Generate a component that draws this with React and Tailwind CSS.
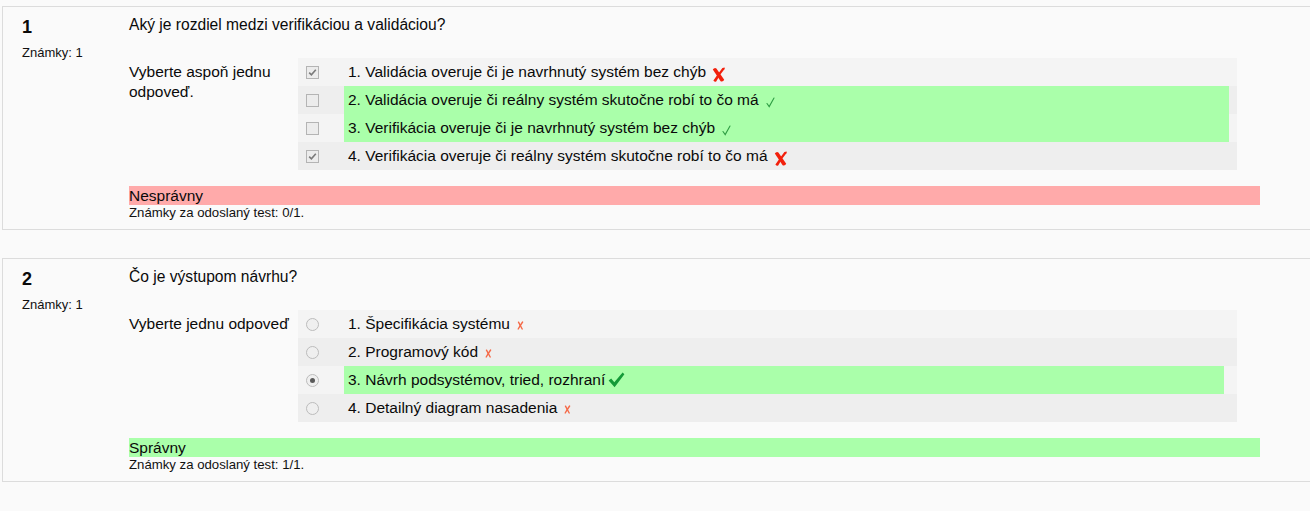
import React from "react";

const q1 = [
  { text: "1. Validácia overuje či je navrhnutý systém bez chýb", selected: true, correct: false },
  { text: "2. Validácia overuje či reálny systém skutočne robí to čo má", selected: false, correct: true },
  { text: "3. Verifikácia overuje či je navrhnutý systém bez chýb", selected: false, correct: true },
  { text: "4. Verifikácia overuje či reálny systém skutočne robí to čo má", selected: true, correct: false },
];

const q2 = [
  { text: "1. Špecifikácia systému", selected: false, correct: false },
  { text: "2. Programový kód", selected: false, correct: false },
  { text: "3. Návrh podsystémov, tried, rozhraní", selected: true, correct: true },
  { text: "4. Detailný diagram nasadenia", selected: false, correct: false },
];

const BigCross = () => (
  <svg width="13" height="15" viewBox="0 0 13 15" className="ml-[6px] mt-[4px] shrink-0">
    <path d="M0.8 2.6 Q2.2 0.4 4.4 1.4 L12.2 12.8 Q11.2 15 8.6 14.2 Z" fill="#f2200c" />
    <path d="M12.6 0.6 Q13.2 2.2 11.6 3.2 Q7.4 8 4.2 14.4 Q2.2 15.2 1.4 13.6 Q5.8 7 10.4 1 Z" fill="#f2200c" />
  </svg>
);

const SmallCross = () => (
  <svg width="7" height="9" viewBox="0 0 7 9" className="ml-[7px] mt-[2px] shrink-0">
    <path d="M1.5 1.2 L5.2 8" stroke="#f56a48" strokeWidth="1.4" strokeLinecap="round" />
    <path d="M5.6 1 Q3.5 4 1.2 8" stroke="#f56a48" strokeWidth="1.4" strokeLinecap="round" fill="none" />
  </svg>
);

const SmallCheck = () => (
  <svg width="9" height="11" viewBox="0 0 9 11" className="ml-[7px] mt-[4px] shrink-0">
    <path d="M1 6.5 L3.2 9.6 L8 1" stroke="#2f9e44" strokeWidth="1.1" fill="none" strokeLinecap="round" />
  </svg>
);

const BigCheck = () => (
  <svg width="17" height="16" viewBox="0 0 17 16" className="ml-[3px] shrink-0">
    <path d="M0.6 8.4 L3.2 6.4 L6.3 10.2 L14.6 0.6 L16.4 2.2 L6.6 15.2 Z" fill="#149a38" />
  </svg>
);

const Checkbox = ({ checked }) => (
  <span className="w-[13px] h-[13px] border border-[#b4b4b4] bg-[#ececec] flex items-center justify-center">
    {checked && (
      <svg width="11" height="11" viewBox="0 0 11 11">
        <path d="M2.2 5.6 L4.4 7.8 L8.8 2.8" stroke="#7a7a7a" strokeWidth="1.6" fill="none" />
      </svg>
    )}
  </span>
);

const Radio = ({ checked }) => (
  <span className="w-[13px] h-[13px] rounded-full border border-[#bcbcbc] bg-[#efefef] flex items-center justify-center">
    {checked && <span className="w-[5px] h-[5px] rounded-full bg-[#5a5a5a]" />}
  </span>
);

const AnswerRow = ({ item, index, multi, greenWidth }) => {
  let icon;
  if (multi) icon = item.correct ? <SmallCheck /> : <BigCross />;
  else icon = item.correct ? <BigCheck /> : <SmallCross />;
  const shaded = index % 2 === 1 ? "bg-[#eeeeee]" : "bg-[#f4f4f4]";
  return (
    <div className={"flex h-[28px] " + shaded}>
      <div className="w-[46px] pl-[8px] flex items-center">
        {multi ? <Checkbox checked={item.selected} /> : <Radio checked={item.selected} />}
      </div>
      <div
        className={"flex items-center pl-[4px] " + (item.correct ? "bg-[#aaffaa]" : "")}
        style={item.correct ? { width: greenWidth } : undefined}
      >
        <span className="whitespace-nowrap">{item.text}</span>
        {icon}
      </div>
    </div>
  );
};

const Question = ({ number, question, prompt, answers, multi, greenWidth, verdict, ok, grade, className }) => (
  <div className={"ml-[2px] w-[1330px] border border-[#dcdcdc] bg-[#fafafa] flex pt-[8px] pb-[8px] " + className}>
    <div className="w-[126px] shrink-0 pl-[19px]">
      <div className="text-[18px] leading-[20px] font-bold mt-[2px]">{number}</div>
      <div className="text-[13px] leading-[16px] mt-[8px] text-[#111]">Známky: 1</div>
    </div>
    <div className="flex-1">
      <div className="text-[15.6px] leading-[20px]">{question}</div>
      <div className="flex mt-[23px]">
        <div className="w-[169px] shrink-0 pt-[4px] pr-[4px] text-[15.5px] leading-[20px]">{prompt}</div>
        <div className="w-[939px] text-[15.5px] leading-[20px]">
          {answers.map((a, i) => (
            <AnswerRow key={i} item={a} index={i} multi={multi} greenWidth={greenWidth} />
          ))}
        </div>
      </div>
      <div className={"mt-[16px] w-[1131px] h-[19px] text-[15.5px] leading-[19px] " + (ok ? "bg-[#aaffaa]" : "bg-[#ffaaaa]")}>
        {verdict}
      </div>
      <div className="text-[13.2px] leading-[16px] text-[#111]">Známky za odoslaný test: {grade}</div>
    </div>
  </div>
);

export default function App() {
  return (
    <div
      className="w-[1310px] h-[511px] overflow-hidden bg-[#fafafa] pt-[6px] text-[#0a0a0a]"
      style={{ fontFamily: '"Liberation Sans", Arial, sans-serif' }}
    >
      <Question
        number="1"
        question="Aký je rozdiel medzi verifikáciou a validáciou?"
        prompt="Vyberte aspoň jednu odpoveď."
        answers={q1}
        multi
        greenWidth={885}
        verdict="Nesprávny"
        ok={false}
        grade="0/1."
        className=""
      />
      <Question
        number="2"
        question="Čo je výstupom návrhu?"
        prompt="Vyberte jednu odpoveď"
        answers={q2}
        multi={false}
        greenWidth={880}
        verdict="Správny"
        ok
        grade="1/1."
        className="mt-[28px]"
      />
    </div>
  );
}
